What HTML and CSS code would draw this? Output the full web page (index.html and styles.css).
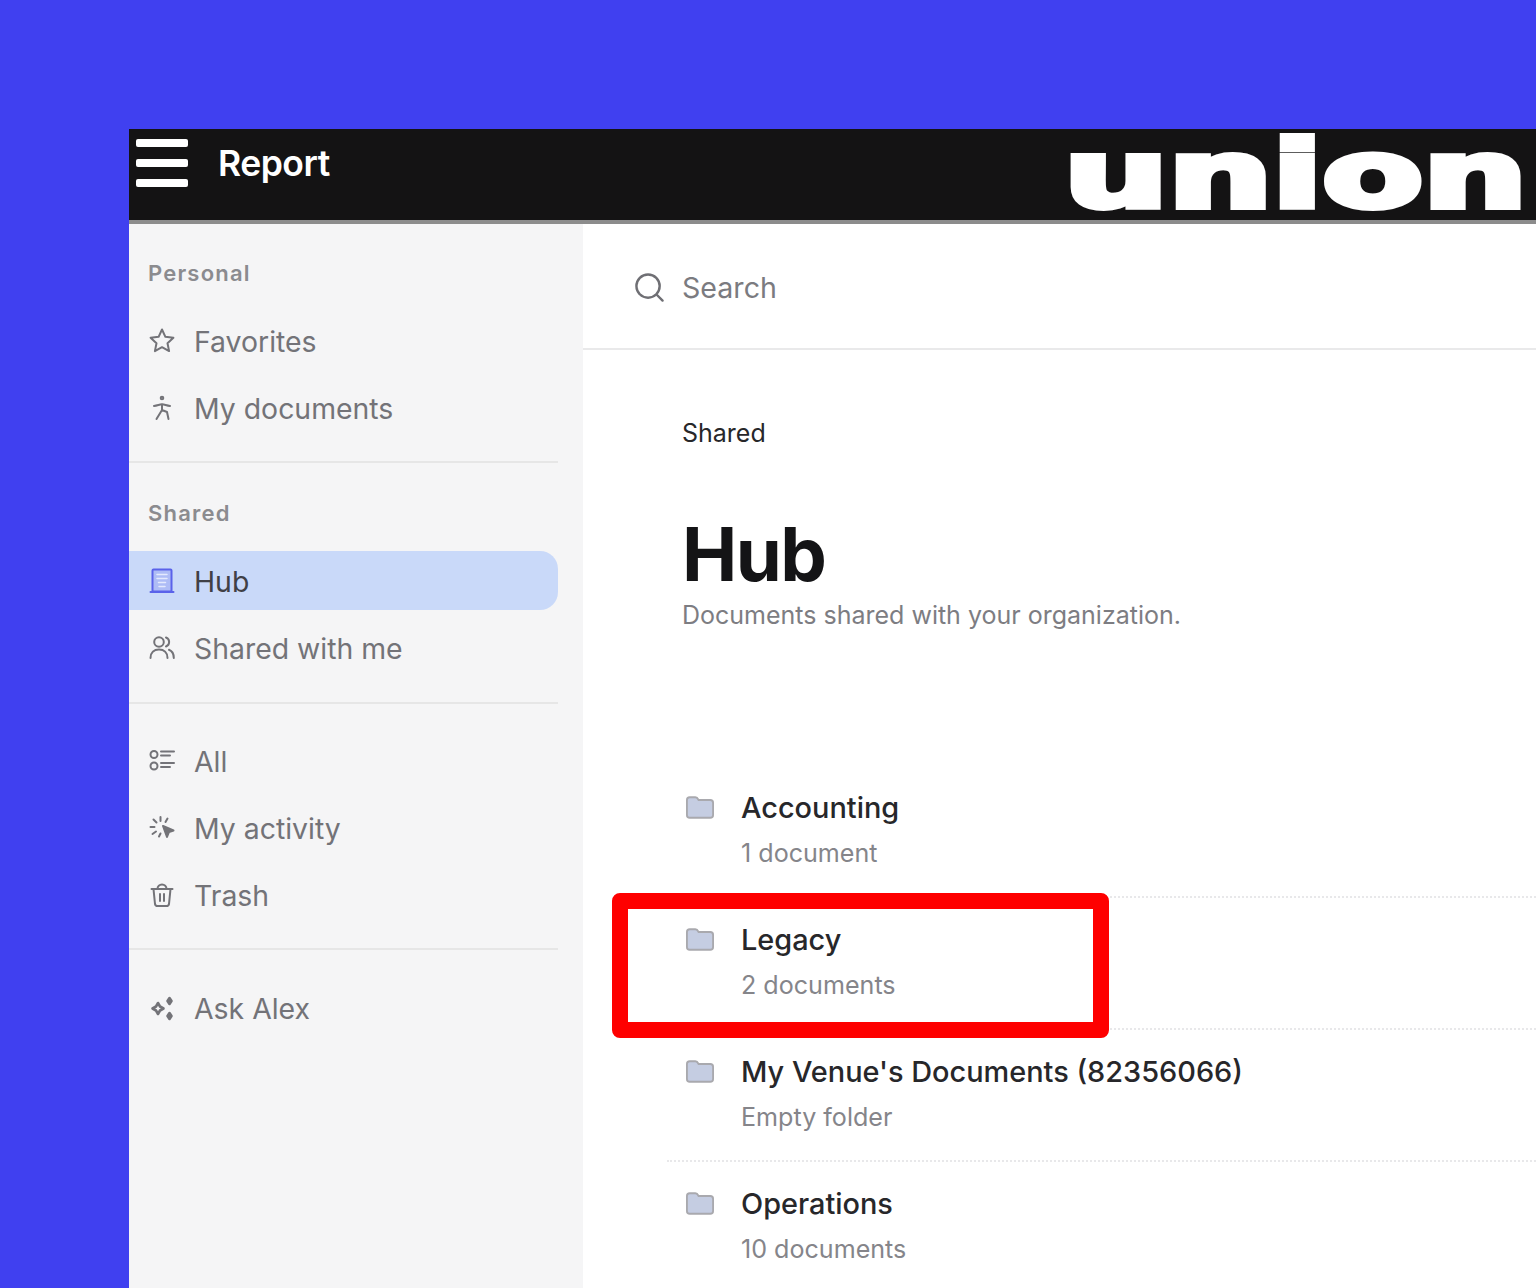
FILE: index.html
```html
<!DOCTYPE html>
<html lang="en">
<head>
<meta charset="UTF-8" />
<title>Report - Hub</title>
<link rel="stylesheet" href="styles.css">
</head>
<body>
  <div class="app">

    <!-- Top bar -->
    <header class="topbar">
      <div class="burger"><span></span><span></span><span></span></div>
      <div class="report">Report</div>
      <div class="brand"><span class="brand-text">union</span></div>
    </header>

    <div class="columns">

      <!-- Sidebar -->
      <aside class="sidebar">
        <div class="side-group side-first">
          <div class="side-label">Personal</div>
          <a class="side-item">
            <svg class="ico" viewBox="0 0 26 26"><path d="M13 1.500l3.400 7.300 8 1-5.900 5.400 1.600 7.900L13 19.200l-7.100 3.900 1.600-7.900L1.600 9.800l8-1z"/></svg>
            Favorites
          </a>
          <a class="side-item">
            <svg class="ico" viewBox="0 0 26 26"><circle cx="13" cy="3" r="1.300"/><path d="M5 11c3-.3 5-1.300 8-1.800 3 .5 5 1.500 8 1.800M13 9.200v5.800M13 15l-5.500 9M13 15l5 2 1.500 7"/></svg>
            My documents
          </a>
        </div>

        <div class="side-group side-second">
          <div class="side-label">Shared</div>
          <a class="side-item active">
            <svg class="ico ico-hub" viewBox="0 0 26 26"><path class="hub-fill" d="M4.500 1.500h17a1 1 0 0 1 1 1v21h-19v-21a1 1 0 0 1 1-1z"/><path d="M1.500 24h23"/><path class="hub-lines" d="M8 6.500h10M8 10.500h10M9.500 14.500h7M10 18.500h6"/></svg>
            Hub
          </a>
          <a class="side-item">
            <svg class="ico" viewBox="0 0 26 26"><circle cx="10" cy="7" r="4.800"/><path d="M1.500 23c0-5.500 3.500-8.500 8.500-8.500s8.500 3 8.500 8.500M17 2.500a4.800 4.800 0 0 1 0 9M20 14.800c3 1.200 4.800 4 4.800 8.200"/></svg>
            Shared with me
          </a>
        </div>

        <div class="side-group side-third">
          <a class="side-item">
            <svg class="ico" viewBox="0 0 26 26"><circle cx="5" cy="6.500" r="3.500"/><circle cx="5" cy="18" r="3.500"/><path d="M12 3.500h13M12 7.500h9M12 15h13M12 19h9"/></svg>
            All
          </a>
          <a class="side-item">
            <svg class="ico" viewBox="0 0 26 26"><path d="M11.500 2v4M4.500 4.500l3 3M1.500 12h4M3.500 19l3.500-2.500M18.500 3.500l-2 3.500M10 21.500l1.500-3"/><path class="ico-solid" d="M14 11l10.500 4.500-4.500 1.500-2 5z"/></svg>
            My activity
          </a>
          <a class="side-item">
            <svg class="ico" viewBox="0 0 26 26"><path d="M2.500 7h21M8.500 7a4.500 4.500 0 0 1 9 0M4.500 7l1.500 15a2.500 2.500 0 0 0 2.500 2h9a2.500 2.500 0 0 0 2.500-2l1.500-15M11 12v7M15 12v7"/></svg>
            Trash
          </a>
        </div>

        <div class="side-group side-last">
          <a class="side-item">
            <svg class="ico ico-thick" viewBox="0 0 26 26"><path d="M9 8l2 3.500 3.500 2-3.500 2-2 3.500-2-3.500-3.500-2 3.500-2z"/><path class="ico-solid" d="M20.500 3l2 3-2 3-2-3zM20.500 18l2 3-2 3-2-3z"/></svg>
            Ask Alex
          </a>
        </div>
      </aside>

      <!-- Main -->
      <main class="main">
        <div class="search">
          <svg class="search-ico" viewBox="0 0 32 32"><circle cx="14.500" cy="14.500" r="12"/><path d="M23.500 23.500l6 6"/></svg>
          <span>Search</span>
        </div>

        <div class="content">
          <div class="crumb">Shared</div>
          <h1 class="title">Hub</h1>
          <p class="subtitle">Documents shared with your organization.</p>

          <ul class="folders">
            <li class="folder">
              <svg class="folder-ico" viewBox="-1 -1 30 24"><path d="M3 0h6c1.500 0 2.500 1 3.500 3H25a3 3 0 0 1 3 3v13a3 3 0 0 1-3 3H3a3 3 0 0 1-3-3V3a3 3 0 0 1 3-3z"/></svg>
              <div>
                <div class="folder-name">Accounting</div>
                <div class="folder-meta">1 document</div>
              </div>
            </li>
            <li class="folder">
              <svg class="folder-ico" viewBox="-1 -1 30 24"><path d="M3 0h6c1.500 0 2.500 1 3.500 3H25a3 3 0 0 1 3 3v13a3 3 0 0 1-3 3H3a3 3 0 0 1-3-3V3a3 3 0 0 1 3-3z"/></svg>
              <div>
                <div class="folder-name">Legacy</div>
                <div class="folder-meta">2 documents</div>
              </div>
              <div class="highlight"></div>
            </li>
            <li class="folder">
              <svg class="folder-ico" viewBox="-1 -1 30 24"><path d="M3 0h6c1.500 0 2.500 1 3.500 3H25a3 3 0 0 1 3 3v13a3 3 0 0 1-3 3H3a3 3 0 0 1-3-3V3a3 3 0 0 1 3-3z"/></svg>
              <div>
                <div class="folder-name">My Venue's Documents (82356066)</div>
                <div class="folder-meta">Empty folder</div>
              </div>
            </li>
            <li class="folder">
              <svg class="folder-ico" viewBox="-1 -1 30 24"><path d="M3 0h6c1.500 0 2.500 1 3.500 3H25a3 3 0 0 1 3 3v13a3 3 0 0 1-3 3H3a3 3 0 0 1-3-3V3a3 3 0 0 1 3-3z"/></svg>
              <div>
                <div class="folder-name">Operations</div>
                <div class="folder-meta">10 documents</div>
              </div>
            </li>
          </ul>
        </div>
      </main>
    </div>
  </div>
</body>
</html>
```

FILE: styles.css
```css
* {
  margin: 0;
  padding: 0;
  box-sizing: border-box;
}

html, body {
  height: 1288px;
  overflow: hidden;
}

body {
  background-color: #4040f0;
  font-family: 'Inter', sans-serif;
  padding: 129px 0 0 129px;
}

.app {
  height: 1159px;
  display: flex;
  flex-direction: column;
  background-color: white;
  filter: blur(0.5px);
}

/* Top bar */
.topbar {
  height: 95px;
  flex: none;
  display: flex;
  align-items: flex-start;
  background-color: #141314;
  border-bottom: 4px solid #8c8c8c;
  color: white;
}

.burger {
  width: 52px;
  margin: 10px 0 0 7px;
  display: flex;
  flex-direction: column;
  gap: 12px;
}

.burger span {
  display: block;
  height: 8px;
  background-color: white;
  border-radius: 2px;
}

.report {
  margin: 13px 0 0 30px;
  font-size: 35.5px;
  line-height: 44px;
  font-weight: 600;
  letter-spacing: -0.5px;
}

.brand {
  margin-left: auto;
  width: 472px;
  height: 91px;
}

.brand-text {
  display: inline-block;
  font-family: 'DejaVu Sans', sans-serif;
  font-weight: 700;
  font-size: 92px;
  line-height: 88px;
  margin-top: 3px;
  -webkit-text-stroke: 6px white;
  transform-origin: left top;
  transform: scaleX(1.59);
}

.columns {
  flex: 1;
  display: flex;
  min-height: 0;
}

/* Sidebar */
.sidebar {
  width: 454px;
  flex: none;
  background-color: #f5f5f6;
}

.side-group {
  width: 429px;
  border-bottom: 2px solid #e6e6e6;
}

.side-first {
  padding: 35px 0 16px;
}

.side-second {
  padding: 36px 0 17px;
}

.side-third {
  padding: 27px 0 16px;
}

.side-last {
  padding-top: 28px;
  border-bottom: none;
}

.side-label {
  padding-left: 19px;
  font-size: 22px;
  line-height: 28px;
  font-weight: 600;
  letter-spacing: 1.200px;
  color: #8b8b8f;
  margin-bottom: 24px;
}

.side-item {
  height: 59px;
  margin-bottom: 8px;
  padding: 2px 0 0 20px;
  display: flex;
  align-items: center;
  gap: 19px;
  font-size: 28.4px;
  color: #737378;
}

.side-item.active {
  background-color: #c9d9f9;
  border-radius: 0 18px 18px 0;
  color: #404046;
}

.ico {
  width: 26px;
  height: 26px;
  flex: none;
  margin-top: -2px;
  fill: none;
  stroke: #737378;
  stroke-width: 2;
  stroke-linecap: round;
  stroke-linejoin: round;
}

.ico-solid {
  fill: #737378;
}

.ico-thick {
  stroke-width: 2.600;
}

.ico-hub {
  stroke: #5a62ea;
}

.hub-fill {
  fill: #aebcf6;
}

.hub-lines {
  stroke: #e4e9fd;
  stroke-width: 1.500;
}

/* Main */
.main {
  flex: 1;
  min-width: 0;
  overflow: hidden;
}

.search {
  height: 126px;
  padding: 2px 0 0 51px;
  display: flex;
  align-items: center;
  gap: 17px;
  border-bottom: 2px solid #e9e9ea;
  font-size: 28.6px;
  color: #7b7b80;
}

.search-ico {
  width: 31px;
  height: 31px;
  fill: none;
  stroke: #6f6f74;
  stroke-width: 2.500;
  stroke-linecap: round;
}

.content {
  padding: 68px 0 0 99px;
}

.crumb {
  font-size: 25px;
  line-height: 30px;
  color: #27272a;
}

.title {
  margin-top: 63px;
  font-size: 74px;
  line-height: 86px;
  font-weight: 700;
  letter-spacing: -1.500px;
  color: #141416;
}

.subtitle {
  margin-top: 3px;
  font-size: 25px;
  line-height: 30px;
  color: #7d7d82;
}

.folders {
  list-style: none;
  margin: 136px 0 0 -15px;
}

.folder {
  position: relative;
  height: 132px;
  padding: 27px 0 0 19px;
  display: flex;
  align-items: flex-start;
  gap: 27px;
  border-bottom: 2px dotted #e8e8ea;
}

.folder-ico {
  width: 28px;
  height: 23px;
  margin-top: 3px;
  flex: none;
  fill: #c5cde2;
  stroke: #a9a9ae;
  stroke-width: 2;
}

.folder-name {
  font-size: 28.9px;
  line-height: 36px;
  font-weight: 500;
  color: #27272a;
  margin-top: -3px;
}

.folder-meta {
  margin-top: 12px;
  font-size: 25.1px;
  line-height: 30px;
  color: #85858a;
}

/* Red annotation box over the Legacy row */
.highlight {
  position: absolute;
  left: -55px;
  top: -5px;
  width: 497px;
  height: 145px;
  border: 16px solid #fe0000;
  border-radius: 8px;
}
```
